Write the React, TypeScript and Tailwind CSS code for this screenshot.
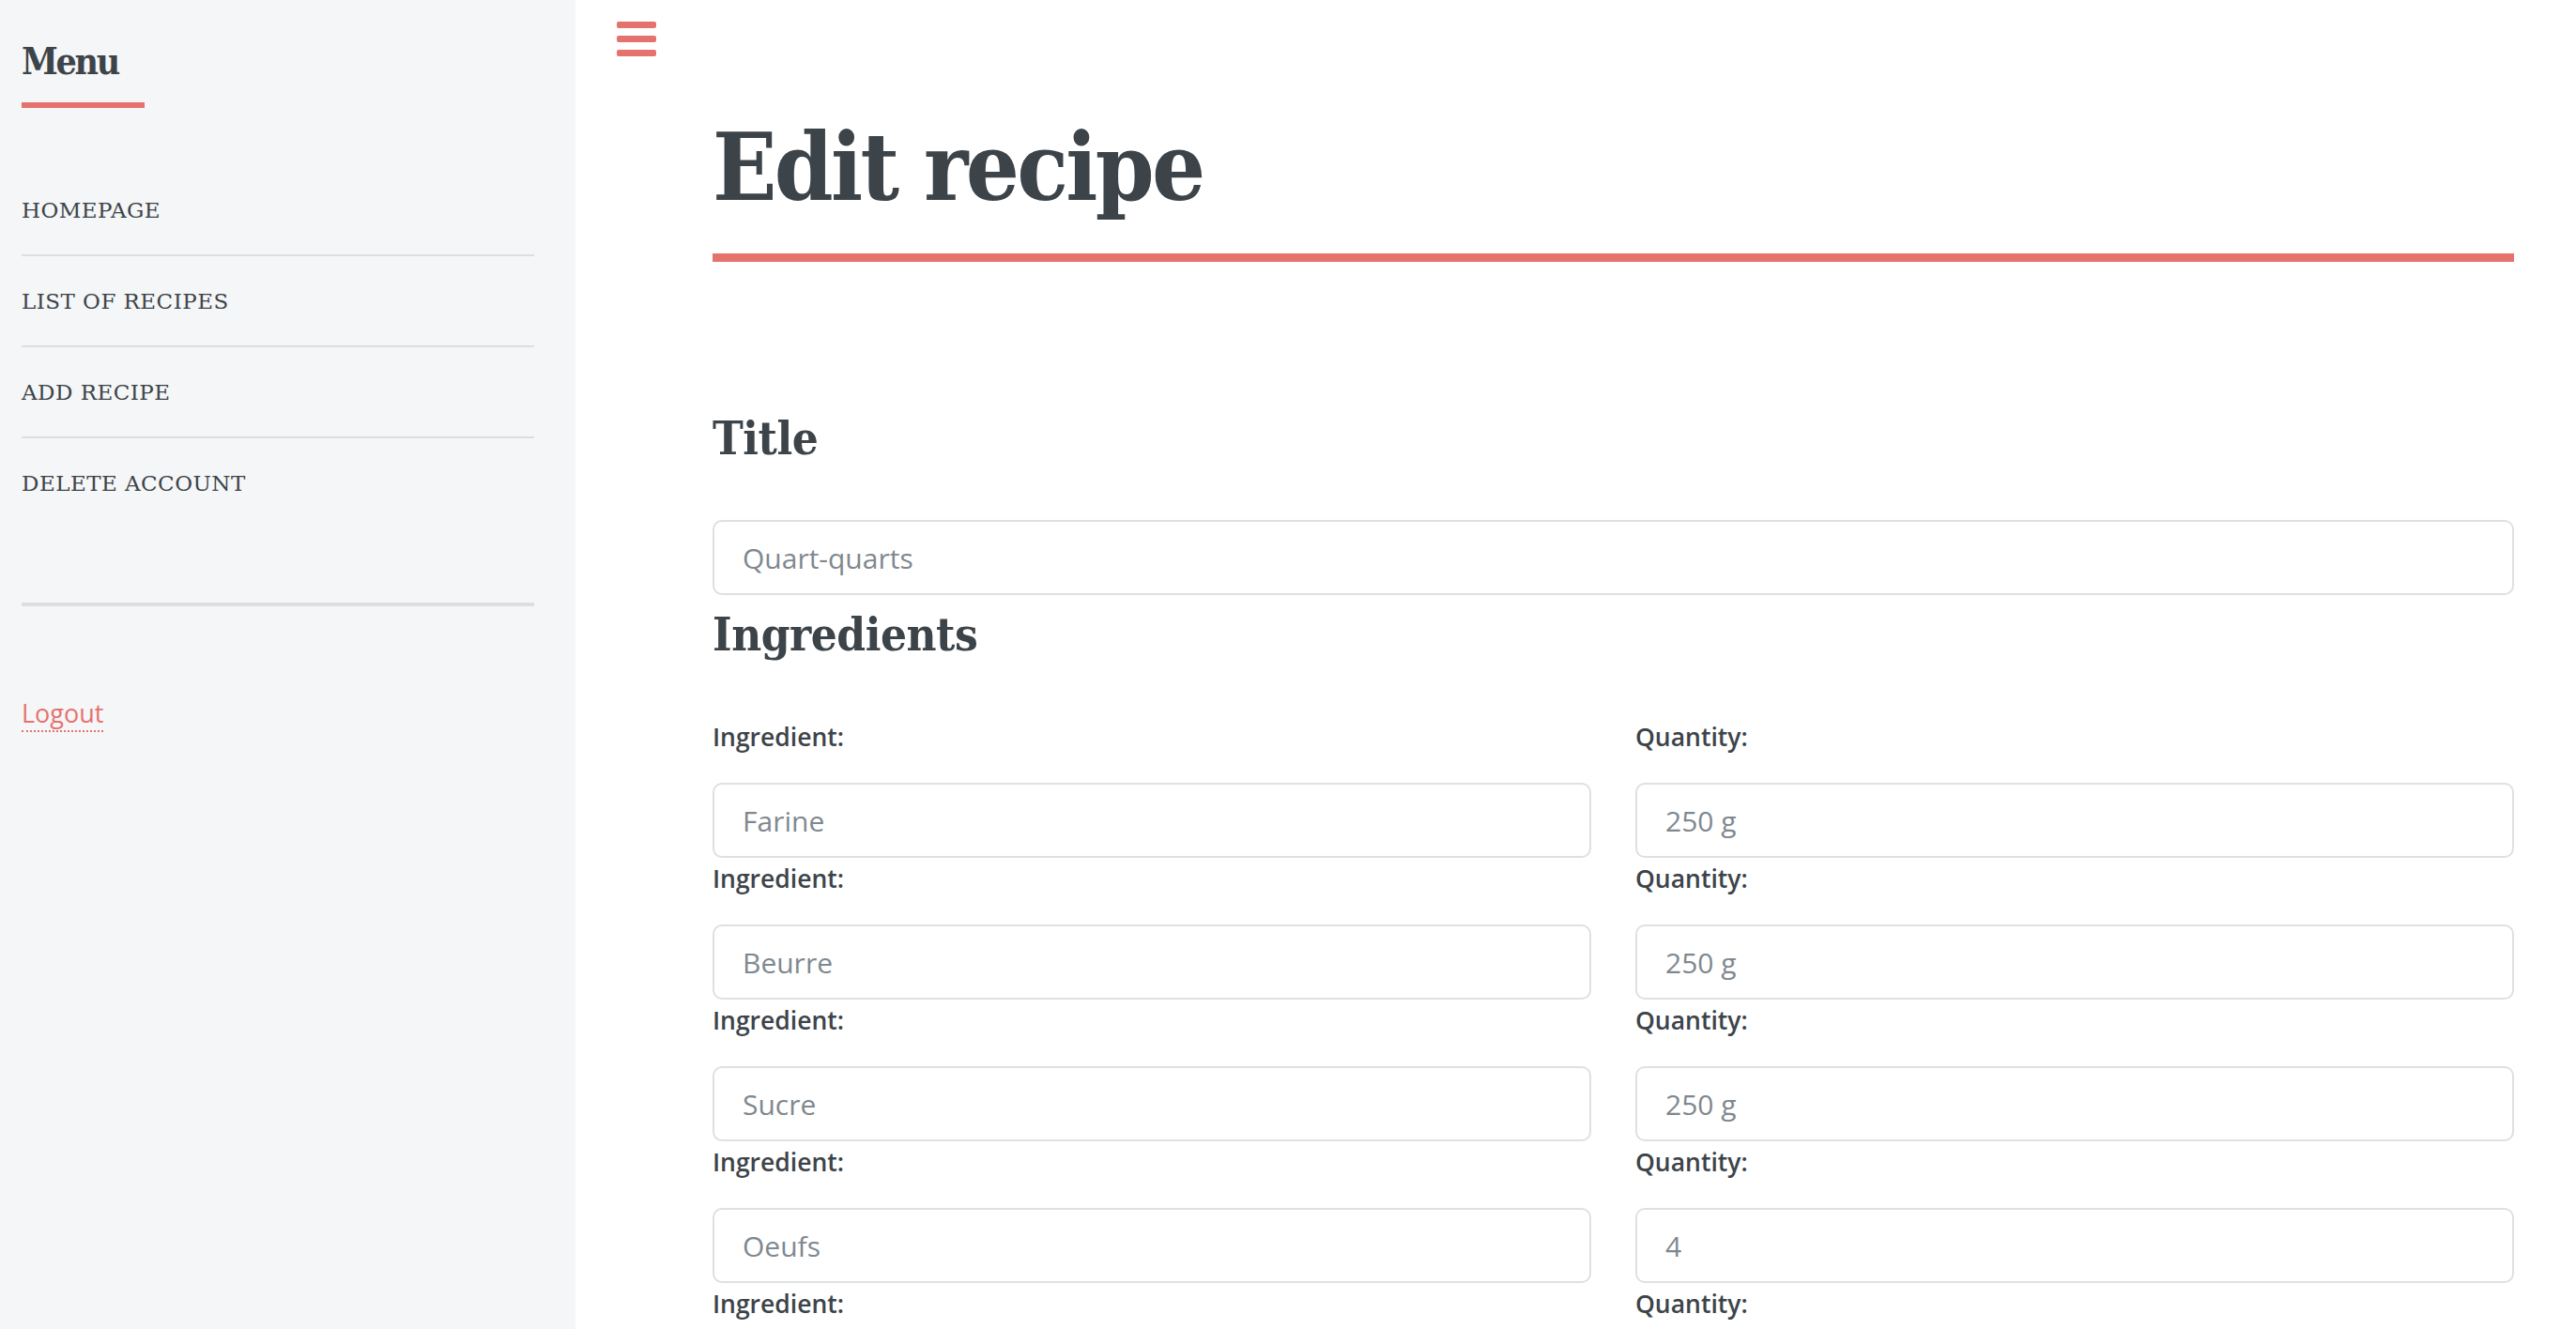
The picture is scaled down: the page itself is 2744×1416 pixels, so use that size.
import React from "react";

const menuItems = ["Homepage", "List of recipes", "Add recipe", "Delete account"];

const ingredients = [
  { name: "Farine", qty: "250 g" },
  { name: "Beurre", qty: "250 g" },
  { name: "Sucre", qty: "250 g" },
  { name: "Oeufs", qty: "4" },
  { name: "", qty: "" },
];

function Field({ label, value }: { label: string; value: string }) {
  return (
    <div className="flex flex-col">
      <label className="font-['Open_Sans',sans-serif] text-[26.5px] leading-[36px] font-semibold text-[#3d4449]">
        {label}
      </label>
      <input
        type="text"
        defaultValue={value}
        className="mt-[31px] mb-[4px] h-[80px] w-full rounded-[10px] border-2 border-[#dde1e2] bg-white pl-[30px] pr-4 font-['Open_Sans',sans-serif] text-[30px] text-[#7f888f] outline-none"
      />
    </div>
  );
}

export default function App() {
  return (
    <div className="flex min-h-screen w-full bg-white">
      {/* sidebar */}
      <aside className="w-[613px] shrink-0 bg-[#f5f6f7] pl-[23px] pr-[44px] pt-[42px]">
        <h2 className="font-['DejaVu_Serif_Condensed','DejaVu_Serif',serif] [font-stretch:condensed] text-[39px] leading-[46px] font-bold text-[#3d4449] tracking-[-0.06em]">
          Menu
        </h2>
        <div className="mt-[21px] h-[6px] w-[131px] bg-[#e6726e]" />
        <ul className="mt-[90px]">
          {menuItems.map((item, i) => (
            <li
              key={item}
              className={
                i === 0
                  ? "pb-[28px]"
                  : "border-t-2 border-[#dbdfe0] pt-[29px] pb-[28px]"
              }
            >
              <a className="block font-['DejaVu_Serif',serif] text-[23px] leading-[38px] uppercase tracking-[0.02em] text-[#3d4449]">
                {item}
              </a>
            </li>
          ))}
        </ul>
        <div className="mt-[80px] h-[4px] w-full bg-[#dbdfe0]" />
        <a className="mt-[96px] inline-block border-b-2 border-dotted border-[#e6726e] font-['Open_Sans',sans-serif] text-[27px] leading-[36px] text-[#e6726e]">
          Logout
        </a>
      </aside>

      {/* main */}
      <main className="relative flex-1 pl-[146px] pr-[66px]">
        <button className="absolute left-[44px] top-[23px] flex w-[42px] flex-col gap-[8px]">
          <span className="h-[7px] w-full rounded-[2px] bg-[#e6726e]" />
          <span className="h-[7px] w-full rounded-[2px] bg-[#e6726e]" />
          <span className="h-[7px] w-full rounded-[2px] bg-[#e6726e]" />
        </button>

        <header className="border-b-[9px] border-[#e6726e] pt-[128px] pb-[42px]">
          <h1 className="font-['DejaVu_Serif_Condensed','DejaVu_Serif',serif] [font-stretch:condensed] text-[100px] leading-[100px] font-bold text-[#3d4449] tracking-[-0.027em]">
            Edit recipe
          </h1>
        </header>

        <h2 className="mt-[159px] font-['DejaVu_Serif_Condensed','DejaVu_Serif',serif] [font-stretch:condensed] text-[49px] leading-[58px] font-bold text-[#3d4449] tracking-[-0.01em]">
          Title
        </h2>
        <input
          type="text"
          defaultValue="Quart-quarts"
          className="mt-[58px] block h-[80px] w-full rounded-[10px] border-2 border-[#dde1e2] bg-white pl-[30px] pr-4 font-['Open_Sans',sans-serif] text-[30px] text-[#7f888f] outline-none"
        />

        <h2 className="mt-[13px] font-['DejaVu_Serif_Condensed','DejaVu_Serif',serif] [font-stretch:condensed] text-[49px] leading-[58px] font-bold text-[#3d4449] tracking-[-0.01em]">
          Ingredients
        </h2>

        <div className="mt-[62px] grid grid-cols-2 gap-x-[47px]">
          {ingredients.map((ing, i) => (
            <React.Fragment key={i}>
              <Field label="Ingredient:" value={ing.name} />
              <Field label="Quantity:" value={ing.qty} />
            </React.Fragment>
          ))}
        </div>
      </main>
    </div>
  );
}
